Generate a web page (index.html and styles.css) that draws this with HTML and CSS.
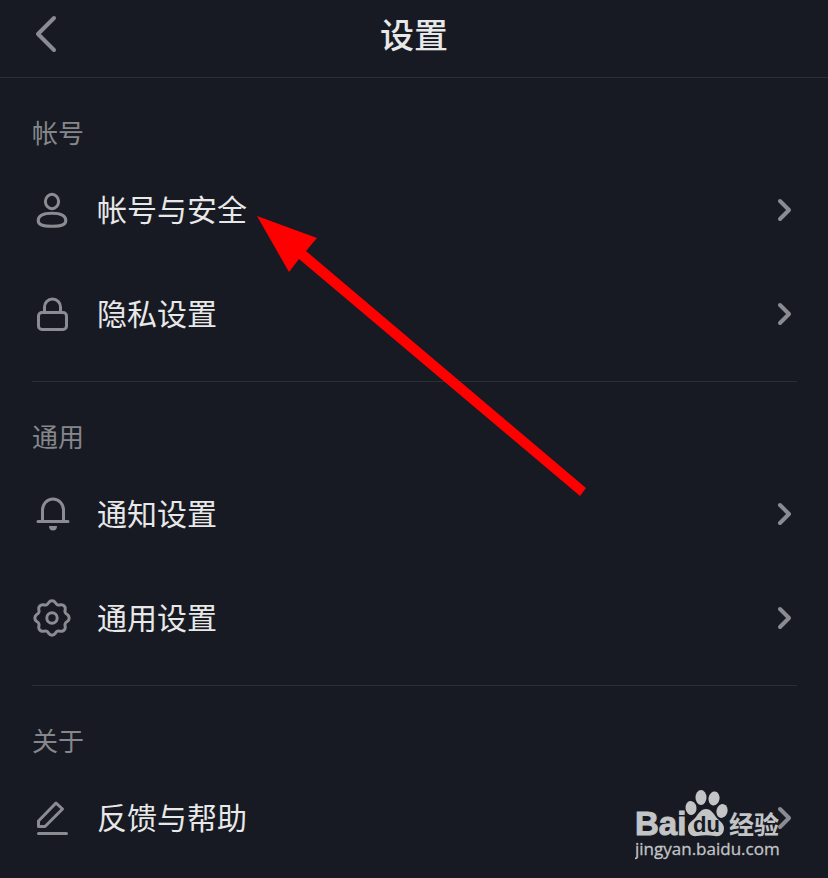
FILE: index.html
```html
<!DOCTYPE html>
<html lang="zh-CN">
<head>
<meta charset="utf-8">
<meta name="viewport" content="width=device-width, initial-scale=1">
<title>设置</title>
<link rel="stylesheet" href="styles.css">
</head>
<body>
<header class="header">
  <button class="back" type="button" aria-label="返回">
    <svg class="icon-back" viewBox="0 0 24 40"><path d="M20 4 4 20l16 16"/></svg>
  </button>
  <h1 class="title">设置</h1>
</header>
<main class="content">
  <section class="group">
    <h2 class="label">帐号</h2>
    <a class="row" href="#account">
      <svg class="icon" viewBox="0 0 40 40"><ellipse cx="20" cy="11.500" rx="6.600" ry="7.200"/><path d="M6.200 30.500c0-5 5.800-7.200 13.800-7.200s13.800 2.200 13.800 7.200c0 4-3.300 5.800-13.800 5.800S6.200 34.500 6.200 30.500Z"/></svg>
      <span class="text">帐号与安全</span>
      <svg class="chevron" viewBox="0 0 16 24"><path d="m3 3 9 9-9 9"/></svg>
    </a>
    <a class="row" href="#privacy">
      <svg class="icon" viewBox="0 0 40 40"><rect x="6.500" y="18.500" width="28" height="17" rx="3.500"/><path d="M12.500 18v-5a8 8 0 0 1 16 0v5"/></svg>
      <span class="text">隐私设置</span>
      <svg class="chevron" viewBox="0 0 16 24"><path d="m3 3 9 9-9 9"/></svg>
    </a>
  </section>
  <section class="group">
    <h2 class="label">通用</h2>
    <a class="row" href="#notice">
      <svg class="icon" viewBox="0 0 40 40"><path d="M6 27.500h30M10.500 27V16a10.500 11 0 0 1 21 0v11"/><path class="solid" d="M17 32h8c0 3-1.500 4.500-4 4.500S17 35 17 32Z"/></svg>
      <span class="text">通知设置</span>
      <svg class="chevron" viewBox="0 0 16 24"><path d="m3 3 9 9-9 9"/></svg>
    </a>
    <a class="row" href="#general">
      <svg class="icon" viewBox="0 0 40 40"><path d="M35.450 16.720A4 4 0 0 1 35.450 23.280A4 4 0 0 0 33.250 28.600A4 4 0 0 1 28.600 33.250A4 4 0 0 0 23.280 35.450A4 4 0 0 1 16.720 35.450A4 4 0 0 0 11.400 33.250A4 4 0 0 1 6.750 28.600A4 4 0 0 0 4.550 23.280A4 4 0 0 1 4.550 16.720A4 4 0 0 0 6.750 11.400A4 4 0 0 1 11.400 6.750A4 4 0 0 0 16.720 4.550A4 4 0 0 1 23.280 4.550A4 4 0 0 0 28.600 6.750A4 4 0 0 1 33.250 11.400A4 4 0 0 0 35.450 16.720Z"/><circle cx="20" cy="20" r="5.200"/></svg>
      <span class="text">通用设置</span>
      <svg class="chevron" viewBox="0 0 16 24"><path d="m3 3 9 9-9 9"/></svg>
    </a>
  </section>
  <section class="group">
    <h2 class="label">关于</h2>
    <a class="row" href="#feedback">
      <svg class="icon" viewBox="0 0 40 40"><path d="M6.500 35.500h28M24 5l6.500 6L13 28.500H6.500V23Z"/></svg>
      <span class="text">反馈与帮助</span>
      <svg class="chevron" viewBox="0 0 16 24"><path d="m3 3 9 9-9 9"/></svg>
    </a>
  </section>
</main>
<svg class="arrow" viewBox="0 0 330 282" aria-hidden="true"><path d="m0 0 60 22-11 13 280 237-6 8L42 43 32 56Z"/></svg>
<svg class="watermark" viewBox="0 0 152 74" role="img" aria-label="Baidu 经验 jingyan.baidu.com">
  <text class="brand" x="0" y="47">Bai</text>
  <ellipse cx="56" cy="20" rx="5.500" ry="7" transform="rotate(-8 56 20)"/>
  <ellipse cx="66" cy="9.500" rx="5.500" ry="7.500"/>
  <ellipse cx="79" cy="10.500" rx="5.500" ry="7" transform="rotate(10 79 10.500)"/>
  <ellipse cx="87" cy="23" rx="5.500" ry="7" transform="rotate(15 87 23)"/>
  <path d="M71 21c5 0 8 5 10 8s8 6 8 11c0 6-4 9-9 8-6-1-12-1-18 0s-9-3-9-8c0-6 6-8 8-11s5-8 10-8Z"/>
  <text class="du" x="58" y="44">du</text>
  <text class="name" x="94" y="46">经验</text>
  <text class="url" x="0" y="67">jingyan.baidu.com</text>
</svg>
</body>
</html>
```
FILE: styles.css
```css
* { box-sizing: border-box; }

body {
  position: relative;
  min-height: 100vh;
  margin: 0;
  background: #171a23;
  color: #e8e8e9;
  font-family: "Noto Sans CJK SC", sans-serif;
}

svg { display: block; }

.header {
  display: grid;
  grid-template-columns: 80px 1fr 80px;
  align-items: center;
  height: 78px;
  padding-bottom: 10px;
  border-bottom: 1px solid #2b2e36;
}

.back {
  padding: 0 0 0 34px;
  border: 0;
  background: none;
}

.icon-back,
.icon,
.chevron {
  flex: none;
  fill: none;
  stroke: #8b8c91;
  stroke-width: 3;
  stroke-linecap: round;
  stroke-linejoin: round;
}

.icon-back {
  width: 24px;
  height: 40px;
  stroke-width: 4;
}

.title {
  margin: 0;
  font-size: 34px;
  font-weight: 500;
  line-height: 40px;
  text-align: center;
}

.content { padding: 0 31px 0 32px; }

.group {
  padding: 34px 0 15px;
  border-bottom: 1px solid #2b2e36;
}

.group:last-child {
  padding-bottom: 8px;
  border-bottom: 0;
}

.label {
  margin: 0 0 6px;
  color: #86878b;
  font-size: 26px;
  font-weight: 400;
  line-height: 40px;
}

.row {
  display: flex;
  align-items: center;
  gap: 25px;
  height: 104px;
  color: inherit;
  font-size: 30px;
  text-decoration: none;
}

.text {
  flex: 1;
  padding-bottom: 4px;
}

.icon { width: 40px; height: 40px; }

.icon .solid { fill: #8b8c91; stroke: none; }

.chevron {
  width: 16px;
  height: 24px;
  margin-right: 4px;
  stroke-width: 4;
}

.arrow {
  position: absolute;
  top: 216px;
  left: 257px;
  width: 330px;
  height: 282px;
  fill: #ff0000;
  pointer-events: none;
}

.watermark {
  position: absolute;
  right: 41px;
  bottom: 16px;
  width: 152px;
  height: 74px;
  fill: #c3c4c6;
  pointer-events: none;
}

.brand {
  font: bold 33px "Liberation Sans", sans-serif;
  stroke: #c3c4c6;
  stroke-width: 1;
}

.du {
  fill: #171a23;
  font: bold 22px "Liberation Sans", sans-serif;
}

.name { font: bold 25px "Noto Sans CJK SC", sans-serif; }

.url {
  font: 17px "Open Sans", sans-serif;
  stroke: #c3c4c6;
  stroke-width: 0.3;
}
```
